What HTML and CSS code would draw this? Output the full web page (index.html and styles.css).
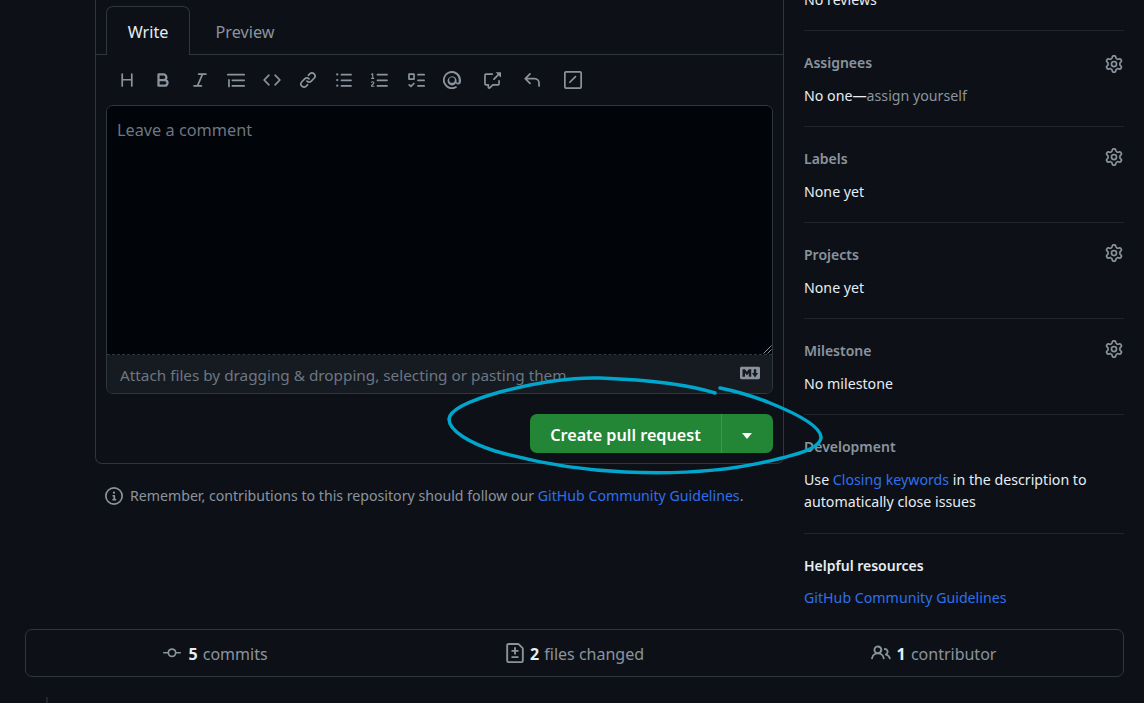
FILE: index.html
```html
<!DOCTYPE html>
<html lang="en">
<head>
    <meta charset="UTF-8">
    <meta name="viewport" content="width=device-width, initial-scale=1.0">
    <title>Open a pull request</title>
    <link rel="stylesheet" href="styles.css">
</head>
<body>

    <svg class="icon-defs" width="0" height="0">
        <symbol id="i-heading" viewBox="0 0 16 16"><path d="M3.75 2a.75.75 0 0 1 .75.75V7h7V2.75a.75.75 0 0 1 1.5 0v10.5a.75.75 0 0 1-1.5 0V8.5h-7v4.75a.75.75 0 0 1-1.5 0V2.75A.75.75 0 0 1 3.75 2Z"/></symbol>
        <symbol id="i-bold" viewBox="0 0 16 16"><path d="M4 2h4.5a3.501 3.501 0 0 1 2.852 5.53A3.499 3.499 0 0 1 9.5 14H4a1 1 0 0 1-1-1V3a1 1 0 0 1 1-1Zm1 7v3h4.5a1.5 1.5 0 0 0 0-3Zm3.5-2a1.5 1.5 0 0 0 0-3H5v3Z"/></symbol>
        <symbol id="i-italic" viewBox="0 0 16 16"><path d="M6 2.75A.75.75 0 0 1 6.75 2h6.5a.75.75 0 0 1 0 1.5h-2.505l-3.858 9H9.25a.75.75 0 0 1 0 1.5h-6.5a.75.75 0 0 1 0-1.5h2.505l3.858-9H6.75A.75.75 0 0 1 6 2.75Z"/></symbol>
        <symbol id="i-quote" viewBox="0 0 16 16"><path d="M.75 2.5h14.5a.75.75 0 0 1 0 1.5H.75a.75.75 0 0 1 0-1.5Zm4 5h10.5a.75.75 0 0 1 0 1.5H4.75a.75.75 0 0 1 0-1.5Zm0 5h10.5a.75.75 0 0 1 0 1.5H4.75a.75.75 0 0 1 0-1.5ZM2.5 7.75v6a.75.75 0 0 1-1.5 0v-6a.75.75 0 0 1 1.5 0Z"/></symbol>
        <symbol id="i-code" viewBox="0 0 16 16"><path d="m11.28 3.22 4.25 4.25a.75.75 0 0 1 0 1.06l-4.25 4.25a.749.749 0 0 1-1.275-.326.749.749 0 0 1 .215-.734L13.94 8l-3.72-3.72a.749.749 0 0 1 .326-1.275.749.749 0 0 1 .734.215Zm-6.56 0a.751.751 0 0 1 1.042.018.751.751 0 0 1 .018 1.042L2.06 8l3.72 3.72a.749.749 0 0 1-.326 1.275.749.749 0 0 1-.734-.215L.47 8.53a.75.75 0 0 1 0-1.06Z"/></symbol>
        <symbol id="i-link" viewBox="0 0 16 16"><path d="m7.775 3.275 1.25-1.25a3.5 3.5 0 1 1 4.95 4.95l-2.5 2.5a3.5 3.5 0 0 1-4.95 0 .751.751 0 0 1 .018-1.042.751.751 0 0 1 1.042-.018 1.998 1.998 0 0 0 2.83 0l2.5-2.5a2.002 2.002 0 0 0-2.83-2.83l-1.25 1.25a.751.751 0 0 1-1.042-.018.751.751 0 0 1-.018-1.042Zm-4.69 9.64a1.998 1.998 0 0 0 2.83 0l1.25-1.25a.751.751 0 0 1 1.042.018.751.751 0 0 1 .018 1.042l-1.25 1.25a3.5 3.5 0 1 1-4.95-4.95l2.5-2.5a3.5 3.5 0 0 1 4.95 0 .751.751 0 0 1-.018 1.042.751.751 0 0 1-1.042.018 1.998 1.998 0 0 0-2.83 0l-2.5 2.5a1.998 1.998 0 0 0 0 2.83Z"/></symbol>
        <symbol id="i-ul" viewBox="0 0 16 16"><path d="M5.75 2.5h8.5a.75.75 0 0 1 0 1.5h-8.5a.75.75 0 0 1 0-1.5Zm0 5h8.5a.75.75 0 0 1 0 1.5h-8.5a.75.75 0 0 1 0-1.5Zm0 5h8.5a.75.75 0 0 1 0 1.5h-8.5a.75.75 0 0 1 0-1.5ZM2 14a1 1 0 1 1 0-2 1 1 0 0 1 0 2Zm1-6a1 1 0 1 1-2 0 1 1 0 0 1 2 0ZM2 4a1 1 0 1 1 0-2 1 1 0 0 1 0 2Z"/></symbol>
        <symbol id="i-ol" viewBox="0 0 16 16"><path d="M5 3.25a.75.75 0 0 1 .75-.75h8.5a.75.75 0 0 1 0 1.5h-8.5A.75.75 0 0 1 5 3.25Zm0 5a.75.75 0 0 1 .75-.75h8.5a.75.75 0 0 1 0 1.5h-8.5A.75.75 0 0 1 5 8.25Zm0 5a.75.75 0 0 1 .75-.75h8.5a.75.75 0 0 1 0 1.5h-8.5a.75.75 0 0 1-.75-.75ZM.924 10.32a.5.5 0 0 1-.851-.525l.001-.001.001-.002.002-.004.007-.011c.097-.144.215-.273.348-.384.228-.19.588-.392 1.068-.392.468 0 .858.181 1.126.484.259.294.377.673.377 1.038 0 .987-.686 1.495-1.156 1.845l-.047.035c-.303.225-.522.4-.654.597h1.357a.5.5 0 0 1 0 1H.5a.5.5 0 0 1-.5-.5c0-1.005.692-1.52 1.167-1.875l.035-.025c.531-.396.8-.625.8-1.078a.57.57 0 0 0-.128-.376C1.806 10.068 1.695 10 1.5 10a.658.658 0 0 0-.429.163.835.835 0 0 0-.144.153ZM2.003 2.5V6h.503a.5.5 0 0 1 0 1H.5a.5.5 0 0 1 0-1h.503V3.308l-.28.14a.5.5 0 0 1-.446-.895l1.003-.5a.5.5 0 0 1 .723.447Z"/></symbol>
        <symbol id="i-tasks" viewBox="0 0 16 16"><path d="M2 2h4a1 1 0 0 1 1 1v4a1 1 0 0 1-1 1H2a1 1 0 0 1-1-1V3a1 1 0 0 1 1-1Zm4.655 8.595a.75.75 0 0 1 0 1.06L4.03 14.28a.75.75 0 0 1-1.06 0l-1.5-1.5a.749.749 0 0 1 .326-1.275.749.749 0 0 1 .734.215l.97.97 2.095-2.095a.75.75 0 0 1 1.06 0ZM9.75 2.5h5.5a.75.75 0 0 1 0 1.5h-5.5a.75.75 0 0 1 0-1.5Zm0 5h5.5a.75.75 0 0 1 0 1.5h-5.5a.75.75 0 0 1 0-1.5Zm0 5h5.5a.75.75 0 0 1 0 1.5h-5.5a.75.75 0 0 1 0-1.5Zm-7.25-9v3h3v-3Z"/></symbol>
        <symbol id="i-mention" viewBox="0 0 16 16"><path d="M4.75 2.37a6.501 6.501 0 0 0 6.5 11.26.75.75 0 0 1 .75 1.298A7.999 7.999 0 0 1 .989 4.148 8 8 0 0 1 16 8v1.5a2.5 2.5 0 0 1-4.542 1.443A4 4 0 1 1 12 8v1.5a1 1 0 0 0 2 0V8a6.5 6.5 0 0 0-9.25-5.63ZM10.5 8a2.5 2.5 0 1 0-5 0 2.5 2.5 0 0 0 5 0Z"/></symbol>
        <symbol id="i-xref" viewBox="0 0 16 16"><path d="M2.75 3.5a.25.25 0 0 0-.25.25v7.5c0 .138.112.25.25.25h2a.75.75 0 0 1 .75.75v2.19l2.72-2.72a.749.749 0 0 1 .53-.22h4.5a.25.25 0 0 0 .25-.25v-2.5a.75.75 0 0 1 1.5 0v2.5A1.75 1.75 0 0 1 13.25 13H9.06l-2.573 2.573A1.458 1.458 0 0 1 4 14.543V13H2.75A1.75 1.75 0 0 1 1 11.25v-7.5C1 2.784 1.784 2 2.75 2h5.5a.75.75 0 0 1 0 1.5ZM16 1.25v4.146a.25.25 0 0 1-.427.177L14.03 4.03l-3.75 3.75a.749.749 0 0 1-1.275-.326.749.749 0 0 1 .215-.734l3.75-3.75-1.543-1.543A.25.25 0 0 1 11.604 1h4.146a.25.25 0 0 1 .25.25Z"/></symbol>
        <symbol id="i-reply" viewBox="0 0 16 16"><path d="M6.78 1.97a.75.75 0 0 1 0 1.06L3.81 6h6.44A4.75 4.75 0 0 1 15 10.75v2.5a.75.75 0 0 1-1.5 0v-2.5a3.25 3.25 0 0 0-3.25-3.25H3.81l2.97 2.97a.749.749 0 0 1-.326 1.275.749.749 0 0 1-.734-.215L1.47 7.28a.75.75 0 0 1 0-1.06l4.25-4.25a.75.75 0 0 1 1.06 0Z"/></symbol>
        <symbol id="i-slash" viewBox="0 0 16 16"><path d="M1.75 0h12.5C15.216 0 16 .784 16 1.75v12.5A1.75 1.75 0 0 1 14.25 16H1.75A1.75 1.75 0 0 1 0 14.25V1.75C0 .784.784 0 1.75 0ZM1.5 1.75v12.5c0 .138.112.25.25.25h12.5a.25.25 0 0 0 .25-.25V1.75a.25.25 0 0 0-.25-.25H1.75a.25.25 0 0 0-.25.25Zm9.22 2.72a.75.75 0 0 1 0 1.06l-5 5a.75.75 0 1 1-1.06-1.06l5-5a.75.75 0 0 1 1.06 0Z"/></symbol>
        <symbol id="i-gear" viewBox="0 0 16 16"><path d="M8 0a8.2 8.2 0 0 1 .701.031C9.444.095 9.99.645 10.16 1.29l.288 1.107c.018.066.079.158.212.224.231.114.454.243.668.386.123.082.233.09.299.071l1.103-.303c.644-.176 1.392.021 1.82.63.27.385.506.792.704 1.218.315.675.111 1.422-.364 1.891l-.814.806c-.049.048-.098.147-.088.294.016.257.016.515 0 .772-.01.147.038.246.088.294l.814.806c.475.469.679 1.216.364 1.891a7.977 7.977 0 0 1-.704 1.217c-.428.61-1.176.807-1.82.63l-1.102-.302c-.067-.019-.177-.011-.3.071a5.909 5.909 0 0 1-.668.386c-.133.066-.194.158-.211.224l-.29 1.106c-.168.646-.715 1.196-1.458 1.26a8.006 8.006 0 0 1-1.402 0c-.743-.064-1.289-.614-1.458-1.26l-.289-1.106c-.018-.066-.079-.158-.212-.224a5.738 5.738 0 0 1-.668-.386c-.123-.082-.233-.09-.299-.071l-1.103.303c-.644.176-1.392-.021-1.82-.63a8.12 8.12 0 0 1-.704-1.218c-.315-.675-.111-1.422.363-1.891l.815-.806c.05-.048.098-.147.088-.294a6.214 6.214 0 0 1 0-.772c.01-.147-.038-.246-.088-.294l-.815-.806C.635 6.045.431 5.298.746 4.623a7.92 7.92 0 0 1 .704-1.217c.428-.61 1.176-.807 1.82-.63l1.102.302c.067.019.177.011.3-.071.214-.143.437-.272.668-.386.133-.066.194-.158.211-.224l.29-1.106C6.009.645 6.556.095 7.299.03 7.53.01 7.764 0 8 0Zm-.571 1.525c-.036.003-.108.036-.137.146l-.289 1.105c-.147.561-.549.967-.998 1.189-.173.086-.34.183-.5.29-.417.278-.97.423-1.529.27l-1.103-.303c-.109-.03-.175.016-.195.045-.22.312-.412.644-.573.99-.014.031-.021.11.059.19l.815.806c.411.406.562.957.53 1.456a4.709 4.709 0 0 0 0 .582c.032.499-.119 1.05-.53 1.456l-.815.806c-.081.08-.073.159-.059.19.162.346.353.677.573.989.02.03.085.076.195.046l1.102-.303c.56-.153 1.113-.008 1.53.27.161.107.328.204.501.29.447.222.85.629.997 1.189l.289 1.105c.029.109.101.143.137.146a6.6 6.6 0 0 0 1.142 0c.036-.003.108-.036.137-.146l.289-1.105c.147-.561.549-.967.998-1.189.173-.086.34-.183.5-.29.417-.278.97-.423 1.529-.27l1.103.303c.109.029.175-.016.195-.045.22-.313.411-.644.573-.99.014-.031.021-.11-.059-.19l-.815-.806c-.411-.406-.562-.957-.53-1.456a4.709 4.709 0 0 0 0-.582c-.032-.499.119-1.05.53-1.456l.815-.806c.081-.08.073-.159.059-.19a6.464 6.464 0 0 0-.573-.989c-.02-.03-.085-.076-.195-.046l-1.102.303c-.56.153-1.113.008-1.53-.27a4.44 4.44 0 0 0-.501-.29c-.447-.222-.85-.629-.997-1.189l-.289-1.105c-.029-.11-.101-.143-.137-.146a6.6 6.6 0 0 0-1.142 0ZM11 8a3 3 0 1 1-6 0 3 3 0 0 1 6 0ZM9.5 8a1.5 1.5 0 1 0-3.001.001A1.5 1.5 0 0 0 9.5 8Z"/></symbol>
    </svg>

    <div class="page">
        <div class="compare">
            <div class="main-col">
                <main class="composer">
                    <div class="tabnav">
                        <span class="tab tab-active">Write</span>
                        <span class="tab">Preview</span>
                    </div>

                    <div class="toolbar">
                        <svg class="tool"><use href="#i-heading"/></svg>
                        <svg class="tool"><use href="#i-bold"/></svg>
                        <svg class="tool"><use href="#i-italic"/></svg>
                        <svg class="tool"><use href="#i-quote"/></svg>
                        <svg class="tool"><use href="#i-code"/></svg>
                        <svg class="tool"><use href="#i-link"/></svg>
                        <svg class="tool"><use href="#i-ul"/></svg>
                        <svg class="tool"><use href="#i-ol"/></svg>
                        <svg class="tool"><use href="#i-tasks"/></svg>
                        <svg class="tool"><use href="#i-mention"/></svg>
                        <svg class="tool tool-wide"><use href="#i-xref"/></svg>
                        <svg class="tool tool-wide"><use href="#i-reply"/></svg>
                        <svg class="tool tool-wide"><use href="#i-slash"/></svg>
                    </div>

                    <div class="editor">
                        <div class="editor-input">
                            <span class="placeholder">Leave a comment</span>
                            <svg class="resize-grip" viewBox="0 0 10 10"><path d="M9.5 1.5 1.5 9.5M9.5 5.5 5.5 9.5" /></svg>
                        </div>
                        <div class="editor-foot">
                            <span class="attach">Attach files by dragging &amp; dropping, selecting or pasting them.</span>
                            <svg class="md-icon" viewBox="0 0 16 16"><path d="M14.85 3c.63 0 1.15.52 1.14 1.15v7.7c0 .63-.51 1.15-1.15 1.15H1.15C.52 13 0 12.48 0 11.84V4.15C0 3.52.52 3 1.15 3ZM9 11V5H7L5.5 7 4 5H2v6h2V8l1.5 1.92L7 8v3Zm2.99.5L14.5 8H13V5h-2v3H9.5Z"/></svg>
                        </div>
                    </div>

                    <div class="actions">
                        <div class="btn-group">
                            <span class="btn-main">Create pull request</span>
                            <span class="btn-caret"><i class="caret"></i></span>
                        </div>
                    </div>
                </main>

                <p class="note">
                    <svg class="note-icon" viewBox="0 0 16 16"><path d="M0 8a8 8 0 1 1 16 0A8 8 0 0 1 0 8Zm8-6.5a6.5 6.5 0 1 0 0 13 6.5 6.5 0 0 0 0-13ZM6.5 7.75A.75.75 0 0 1 7.25 7h1a.75.75 0 0 1 .75.75v2.75h.25a.75.75 0 0 1 0 1.5h-2a.75.75 0 0 1 0-1.5h.25v-2h-.25a.75.75 0 0 1-.75-.75ZM8 6a1 1 0 1 1 0-2 1 1 0 0 1 0 2Z"/></svg>
                    <span>Remember, contributions to this repository should follow our <a href="#">GitHub Community Guidelines</a>.</span>
                </p>
            </div>

            <aside class="sidebar">
                <section class="side-item">
                    <div class="side-head"><span>Reviewers</span></div>
                    <p>No reviews</p>
                </section>
                <section class="side-item">
                    <div class="side-head"><span>Assignees</span><svg class="gear gear-low"><use href="#i-gear"/></svg></div>
                    <p>No one—<span class="muted">assign yourself</span></p>
                </section>
                <section class="side-item">
                    <div class="side-head"><span>Labels</span><svg class="gear"><use href="#i-gear"/></svg></div>
                    <p>None yet</p>
                </section>
                <section class="side-item">
                    <div class="side-head"><span>Projects</span><svg class="gear"><use href="#i-gear"/></svg></div>
                    <p>None yet</p>
                </section>
                <section class="side-item">
                    <div class="side-head"><span>Milestone</span><svg class="gear"><use href="#i-gear"/></svg></div>
                    <p>No milestone</p>
                </section>
                <section class="side-item side-dev">
                    <div class="side-head"><span>Development</span></div>
                    <p>Use <a href="#">Closing keywords</a> in the description to<br>automatically close issues</p>
                </section>
                <section class="side-help">
                    <h3>Helpful resources</h3>
                    <a href="#">GitHub Community Guidelines</a>
                </section>
            </aside>
        </div>

        <div class="stats">
            <div class="stat">
                <svg class="stat-icon" viewBox="0 0 16 16"><path d="M11.93 8.5a4.002 4.002 0 0 1-7.86 0H.75a.75.75 0 0 1 0-1.5h3.32a4.002 4.002 0 0 1 7.86 0h3.32a.75.75 0 0 1 0 1.5Zm-1.43-.75a2.5 2.5 0 1 0-5 0 2.5 2.5 0 0 0 5 0Z"/></svg>
                <span><b>5</b> commits</span>
            </div>
            <div class="stat stat-files">
                <svg class="stat-icon stat-icon-lg" viewBox="0 0 16 16"><path d="M1 1.75C1 .784 1.784 0 2.75 0h7.586c.464 0 .909.184 1.237.513l2.914 2.914c.329.328.513.773.513 1.237v9.586A1.75 1.75 0 0 1 13.25 16H2.75A1.75 1.75 0 0 1 1 14.25Zm1.75-.25a.25.25 0 0 0-.25.25v12.5c0 .138.112.25.25.25h10.5a.25.25 0 0 0 .25-.25V4.664a.25.25 0 0 0-.073-.177l-2.914-2.914a.25.25 0 0 0-.177-.073ZM8 3.25a.75.75 0 0 1 .75.75v1.5h1.5a.75.75 0 0 1 0 1.5h-1.5v1.5a.75.75 0 0 1-1.5 0V7h-1.5a.75.75 0 0 1 0-1.5h1.5V4A.75.75 0 0 1 8 3.25Zm-3 8a.75.75 0 0 1 .75-.75h4.5a.75.75 0 0 1 0 1.5h-4.5a.75.75 0 0 1-.75-.75Z"/></svg>
                <span><b>2</b> files changed</span>
            </div>
            <div class="stat stat-people">
                <svg class="stat-icon stat-icon-lg" viewBox="0 0 16 16"><path d="M2 5.5a3.5 3.5 0 1 1 5.898 2.549 5.508 5.508 0 0 1 3.034 4.084.75.75 0 1 1-1.482.235 4 4 0 0 0-7.9 0 .75.75 0 0 1-1.482-.236A5.507 5.507 0 0 1 3.102 8.05 3.493 3.493 0 0 1 2 5.5ZM11 4a3.001 3.001 0 0 1 2.22 5.018 5.01 5.01 0 0 1 2.56 3.012.749.749 0 0 1-.885.954.752.752 0 0 1-.549-.514 3.507 3.507 0 0 0-2.522-2.372.75.75 0 0 1-.574-.73v-.352a.75.75 0 0 1 .416-.672A1.5 1.5 0 0 0 11 5.5.75.75 0 0 1 11 4Zm-5.5-.5a2 2 0 1 0-.001 3.999A2 2 0 0 0 5.5 3.5Z"/></svg>
                <span><b>1</b> contributor</span>
            </div>
        </div>

        <div class="timeline-stub"></div>
    </div>

    <!-- hand drawn circle round the button, sits over the page -->
    <svg class="scribble" viewBox="0 0 1144 703" width="1144" height="703">
        <path d="M715 393 C690 385 650 380 600 378 C565 377 530 384 500 392 C475 399 450 408 449 419 C449 431 470 443 495 451 C530 461 575 470 625 472 C670 474 720 472 765 462 C795 455 821 449 821 437 C820 426 795 413 770 403 C755 397 735 391 720 388"/>
    </svg>

</body>
</html>
```

FILE: styles.css
```css
* {
    box-sizing: border-box;
}
html, body {
    margin: 0;
    height: 703px;
    overflow: hidden;
}
body {
    position: relative;
    background: #0d1117;
    color: #e6edf3;
    font-family: "Noto Sans", sans-serif;
    font-size: 14.2px;
    line-height: 22px;
}
a {
    color: #2f6feb;
    text-decoration: none;
}
p {
    margin: 0;
}
svg {
    fill: currentColor;
}
.icon-defs {
    position: absolute;
}

/* page is scrolled, so the top of it is cut off */
.page {
    margin-top: -66px;
    padding: 0 20px 0 25px;
}
.compare {
    display: flex;
    align-items: flex-start;
    gap: 20px;
    margin-left: 70px;
}

/* left column */
.main-col {
    width: 689px;
}
.composer {
    height: 530px;
    padding-top: 72px;
    border: 1px solid #30363d;
    border-top: 0;
    border-radius: 0 0 7px 7px;
}
.tabnav {
    display: flex;
    height: 49px;
    padding-left: 10px;
    border-bottom: 1px solid #30363d;
}
.tab {
    width: 84px;
    height: 49px;
    padding-top: 15px;
    text-align: center;
    color: #8b949e;
    font-size: 16.2px;
}
.tab + .tab {
    margin-left: 17px;
    width: 76px;
}
.tab-active {
    color: #e6edf3;
    background: #0d1117;
    border: 1px solid #30363d;
    border-bottom: 0;
    border-radius: 7px 7px 0 0;
    padding-top: 14px;
}
.toolbar {
    display: flex;
    align-items: center;
    height: 50px;
    padding-left: 22.4px;
    gap: 18.1px;
    color: #8b949e;
}
.tool {
    width: 18px;
    height: 18px;
}
.tool-wide {
    margin-left: 4px;
}
.editor {
    margin: 0 10px;
    height: 289px;
    border: 1px solid #30363d;
    border-radius: 7px;
    overflow: hidden;
}
.editor-input {
    position: relative;
    height: 249px;
    padding: 13px 10px;
    background: #010409;
    border-bottom: 1px dashed #30363d;
}
.placeholder {
    color: #6e7681;
    font-size: 16.3px;
}
.resize-grip {
    position: absolute;
    right: 0;
    bottom: 0;
    width: 10px;
    height: 10px;
    fill: none;
    stroke: #8b949e;
}
.editor-foot {
    display: flex;
    align-items: center;
    justify-content: space-between;
    height: 38px;
    padding: 0 12px 0 13px;
    background: #161b22;
    color: #6e7681;
    font-size: 15.3px;
}
.attach {
    margin-top: 2px;
}
.md-icon {
    width: 20px;
    height: 20px;
    color: #8b949e;
    margin-top: -3px;
}
.actions {
    display: flex;
    justify-content: flex-end;
    margin-top: 20px;
    padding-right: 10px;
}
.btn-group {
    display: flex;
    height: 39px;
    background: #238636;
    border-radius: 7px;
    color: #fff;
    font-size: 16.2px;
    font-weight: 600;
}
.btn-main {
    width: 192px;
    padding-top: 2px;
    line-height: 39px;
    text-align: center;
    border-right: 1px solid #3b9a4f;
}
.btn-caret {
    display: flex;
    align-items: center;
    justify-content: center;
    width: 51px;
    padding: 4px 2px 0 0;
}
.caret {
    border: 5px solid transparent;
    border-top: 6px solid #fff;
    border-bottom: 0;
}
.note {
    display: flex;
    align-items: center;
    gap: 7px;
    margin: 20px 0 0 10px;
    color: #8b949e;
    font-size: 14.15px;
}
.note span {
    padding-top: 1px;
}
.note-icon {
    width: 18px;
    height: 18px;
}

/* sidebar */
.sidebar {
    width: 320px;
    padding-top: 1px;
}
.side-item {
    padding: 21px 0 19px;
    border-bottom: 1px solid #21262d;
}
.side-dev {
    padding-bottom: 20px;
}
.side-head {
    display: flex;
    align-items: center;
    justify-content: space-between;
    height: 22px;
    margin-bottom: 11px;
    color: #8b949e;
    font-size: 14px;
    font-weight: 600;
}
.gear {
    width: 18px;
    height: 18px;
    margin: -4px 1px 0 0;
}
.gear-low {
    margin-top: 1px;
}
.muted {
    color: #8b949e;
}
.side-help {
    padding-top: 21px;
}
.side-help h3 {
    margin: 0 0 10px;
    font-size: 14px;
    line-height: 22px;
    font-weight: 600;
}

/* bottom summary */
.stats {
    display: flex;
    height: 48px;
    margin-top: 20px;
    padding: 0 10px;
    border: 1px solid #30363d;
    border-radius: 7px;
}
.stat {
    flex: 1;
    display: flex;
    align-items: center;
    justify-content: center;
    gap: 7px;
    color: #8b949e;
    font-size: 16px;
}
.stat-files {
    gap: 5px;
}
.stat-people {
    gap: 6px;
}
.stat span {
    padding-top: 1px;
}
.stat b {
    color: #e6edf3;
    margin-right: 1px;
}
.stat-icon {
    width: 18px;
    height: 18px;
}
.stat-icon-lg {
    width: 20px;
    height: 20px;
}
.timeline-stub {
    width: 2px;
    height: 30px;
    margin: 20px 0 0 21px;
    background: #21262d;
}

.scribble {
    position: absolute;
    left: 0;
    top: 0;
    fill: none;
    pointer-events: none;
}
.scribble path {
    fill: none;
    stroke: #00a6cc;
    stroke-width: 3.5;
    stroke-linecap: round;
}
```
